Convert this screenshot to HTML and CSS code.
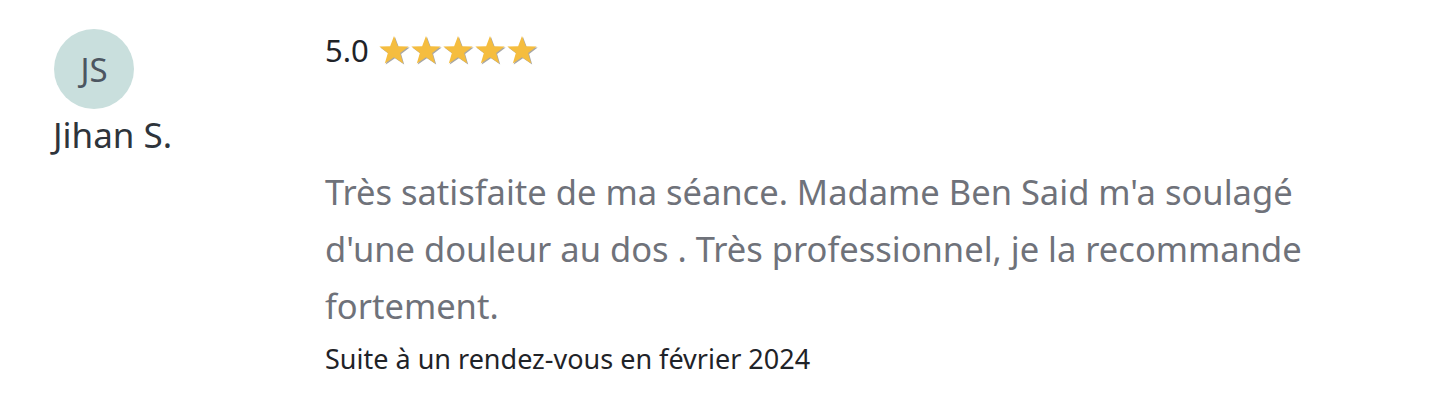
FILE: index.html
```html
<!DOCTYPE html>
<html lang="fr">
<head>
<meta charset="utf-8">
<link rel="stylesheet" href="styles.css">
</head>
<body>
<div class="review">
  <div class="author">
    <div class="avatar">JS</div>
    <div class="name">Jihan S.</div>
  </div>
  <div class="content">
    <div class="rating">
      <span class="score">5.0</span>
      <span class="stars">
        <svg class="star" viewBox="0 0 24 24"><polygon points="12,1.5 14.9,9.2 23,9.3 16.6,14.3 18.9,22.2 12,17.5 5.1,22.2 7.4,14.3 1,9.3 9.1,9.2"/></svg>
        <svg class="star" viewBox="0 0 24 24"><polygon points="12,1.5 14.9,9.2 23,9.3 16.6,14.3 18.9,22.2 12,17.5 5.1,22.2 7.4,14.3 1,9.3 9.1,9.2"/></svg>
        <svg class="star" viewBox="0 0 24 24"><polygon points="12,1.5 14.9,9.2 23,9.3 16.6,14.3 18.9,22.2 12,17.5 5.1,22.2 7.4,14.3 1,9.3 9.1,9.2"/></svg>
        <svg class="star" viewBox="0 0 24 24"><polygon points="12,1.5 14.9,9.2 23,9.3 16.6,14.3 18.9,22.2 12,17.5 5.1,22.2 7.4,14.3 1,9.3 9.1,9.2"/></svg>
        <svg class="star" viewBox="0 0 24 24"><polygon points="12,1.5 14.9,9.2 23,9.3 16.6,14.3 18.9,22.2 12,17.5 5.1,22.2 7.4,14.3 1,9.3 9.1,9.2"/></svg>
      </span>
    </div>
    <p class="text">Très satisfaite de ma séance. Madame Ben Said m'a soulagé d'une douleur au dos . Très professionnel, je la recommande fortement.</p>
    <div class="meta">Suite à un rendez-vous en février 2024</div>
  </div>
</div>
</body>
</html>
```

FILE: styles.css
```css
html, body {
  margin: 0;
  padding: 0;
  background: #ffffff;
}
body {
  font-family: "Noto Sans", "Open Sans", sans-serif;
}
.review {
  display: flex;
  padding: 29px 0 0 53px;
}
.author {
  width: 272px;
  flex: none;
  display: flex;
  flex-direction: column;
}
.avatar {
  width: 80px;
  height: 80px;
  margin-left: 1px;
  border-radius: 50%;
  background: #c9dfdd;
  color: #4c5661;
  font-size: 33px;
  display: flex;
  align-items: center;
  justify-content: center;
}
.name {
  margin-top: 4px;
  font-size: 35px;
  color: #2e343b;
  line-height: 44px;
}
.content {
  width: 1000px;
}
.rating {
  display: flex;
  align-items: center;
  height: 42px;
}
.score {
  font-size: 31px;
  line-height: 42px;
  color: #1f2328;
  margin-right: 9px;
}
.stars {
  display: flex;
}
.star {
  width: 32px;
  height: 32px;
  fill: #f5bd3f;
  filter: drop-shadow(1px 1px 0.5px rgba(0,0,0,0.35));
}
.text {
  margin: 92px 0 0;
  font-size: 34.5px;
  line-height: 57px;
  color: #6f727a;
  width: 995px;
}
.meta {
  margin-top: 7px;
  font-size: 27px;
  color: #1f2328;
  line-height: 36px;
}
```
